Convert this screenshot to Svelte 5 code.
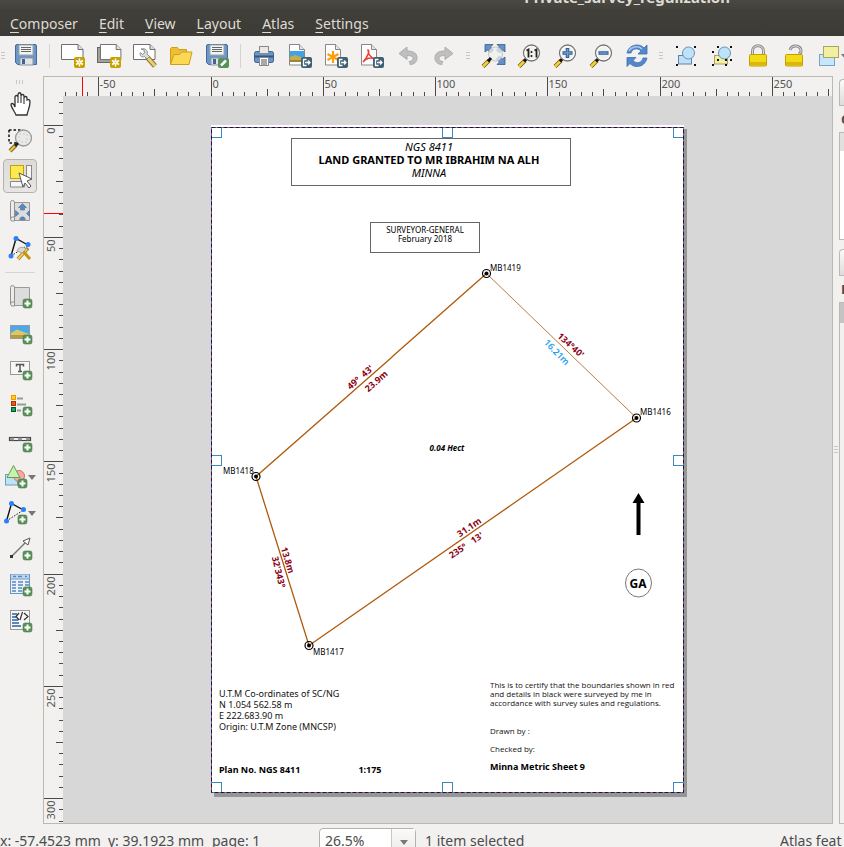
<script>
  const disk =
    '<path d="M3 .5h18q1.500 0 1.500 1.500v18.500h-19l-2-2v-16.500q0-1.500 1.500-1.500z" fill="#6c96c8" stroke="#456a9b"/><rect x="5" y="1" width="14" height="10" fill="#f4f4f2" stroke="#9aa"/><path d="M7 3.500h10M7 5.500h10M7 7.500h10" stroke="#666" stroke-width="1"/><rect x="6" y="14" width="13" height="7" fill="#e4e4e2" stroke="#8796a8"/><rect x="8" y="15" width="3" height="5" fill="#3f6491"/>';
  const sheet =
    '<path d="M.5 .5h16.500l5 5v10h-21.500z" fill="#fff" stroke="#6f6f6f"/><path d="M17 .5v5h5" fill="#ddd" stroke="#6f6f6f"/>';
  const star =
    '<rect x="13" y="13" width="11" height="11" rx="2" fill="#c8a000"/><path d="M18.500 14.500v8M15 16.500l7 4M22 16.500l-7 4" stroke="#fff" stroke-width="1.500"/><circle cx="18.500" cy="18.500" r="2" fill="#fff"/><circle cx="18.500" cy="18.500" r="1" fill="#e8cf60"/>';
  const plus =
    '<rect x="15" y="14" width="9" height="9" rx="2" fill="#589059" stroke="#4b7d4c" stroke-width=".6"/><path d="M19.500 15.500v6M16.500 18.500h6" stroke="#fff" stroke-width="2"/>';
  const shiftPlus = plus.replace('<rect', '<g transform="translate(-1 0)"><rect') + '</g>';
  const filePage =
    '<path d="M1.500 .5h10l5 5v15.500h-15z" fill="#fff" stroke="#888"/><path d="M11.500 .5v5h5" fill="#e4e4e4" stroke="#888"/>';
  const exporter =
    '<rect x="13" y="13" width="11" height="11" rx="2" fill="#3f5f74"/><path d="M18.500 15.500h-3v6h3M17 18.500h5M20 16.500l2 2-2 2" stroke="#fff" stroke-width="1.300" fill="none"/>';
  const handle =
    '<path d="M2 22.500l6-6" stroke="#6b5a20" stroke-width="4"/><path d="M2 22.500l6-6" stroke="#f9d12e" stroke-width="2.500"/><path d="M7 17.500l3-3.500" stroke="#111" stroke-width="3"/>';
  const lens = handle + '<circle cx="14.500" cy="9" r="8" fill="#f0f0ee" stroke="#777" stroke-width="1.300"/><circle cx="14.500" cy="9" r="6.500" fill="none" stroke="#fff"/>';
  const dots = (pts) => pts.map(([x, y]) => `<rect x="${x}" y="${y}" width="2" height="2" fill="#111"/>`).join('');
  const lockBody = '<rect x="3.500" y="10.500" width="17" height="11.500" rx="1" fill="#f2dc16" stroke="#c59f00"/><path d="M4 19.500h16" stroke="#dcb60c" stroke-width="3"/>';
  const nodes =
    '<path d="M3 20L8 2.500L20 9" fill="none" stroke="#111" stroke-width="1.400"/><path d="M3 20L20 9" stroke="#111" stroke-dasharray="1.500 1.500"/><g fill="#2a7fff"><circle cx="8" cy="2.500" r="2.500"/><circle cx="20" cy="8.500" r="2.500"/><circle cx="3" cy="20" r="2.500"/></g>';
  const roll =
    '<path d="M6 2.500h15.500v18h-15z" fill="#dcdcdc" stroke="#9a9a9a"/><path d="M6.500 17q-4-1-4 2t4 2V2.500q0-2-2-2t-2 2V19" fill="#ececec" stroke="#8f8f8f"/>';

  const icons = {
    save: disk,
    new: sheet + star,
    duplicate:
      '<rect x=".5" y="3.500" width="17" height="15" fill="#a0a39a" stroke="#666"/><g transform="translate(3 0) scale(.95 1)">' + sheet + '</g>' + star,
    manager:
      sheet +
      '<path d="M14 13l8 9" stroke="#8c7320" stroke-width="5"/><path d="M14.500 13.500l7.500 8.500" stroke="#e8d07a" stroke-width="3"/><path d="M8 5l3 1 .5 3-2 1.500-2-2c-1.500 3 1.500 5.500 4 4l2.500 2.500 2.500-2.500-2.500-2.500c1.500-3-2-6.500-6-5z" fill="#d9dddd" stroke="#80868a" stroke-width=".9"/>',
    open: '<path d="M1.500 20.500V4.500l1-1h6l1 2h8v3" fill="#eebf35" stroke="#cf9d1c"/><path d="M1.500 20.500L5 10.500h5.500l2-2.500h10.500l-3 12.500z" fill="#fcd955" stroke="#cf9d1c"/>',
    saveas:
      disk +
      '<rect x="13" y="14" width="11" height="10" rx="2" fill="#589059"/><path d="M16 21.500l5-5" stroke="#fff" stroke-width="2.500"/>',
    print:
      '<rect x="2.500" y="7.500" width="19" height="11" rx="2" fill="#6a95c8" stroke="#3c5f8d"/><path d="M3 12.500h18" stroke="#35567e" stroke-width="2"/><rect x="7.500" y="2.500" width="9" height="7" fill="#e8e8e6" stroke="#8a8a8a"/><rect x="7.500" y="13.500" width="9" height="8" fill="#fff" stroke="#8a8a8a"/><path d="M9 16h6M9 18h6M9 20h6" stroke="#555"/>',
    image:
      filePage +
      '<rect x="2" y="7" width="14" height="11" fill="#3fa3ec"/><path d="M2 13l5-2 9 3v4H2z" fill="#c4ae4a"/><path d="M2 17h14" stroke="#9a8733" stroke-width="2"/>' + exporter,
    svg: filePage + '<path d="M9 7v12M3.500 10l11 6M14.500 10l-11 6" stroke="#ff9d0a" stroke-width="2.200"/>' + exporter,
    pdf:
      filePage +
      '<path d="M8 6c2 0 0 7-5 12 3-4 8-5 12-3-4-1-7-5-7-9z" fill="none" stroke="#f03a34" stroke-width="1.500"/>' + exporter,
    undo: '<path d="M3 9.500l8-6.500v4c7 0 10 2.500 10 7 0 4-3 6.500-7 6.500 0-1 0-2-1-3 2 0 4-1 4-3 0-2-2-3-6-3v4z" fill="#bfbfbf" stroke="#adadad"/>',
    redo: '<path d="M21 9.500l-8-6.500v4c-7 0-10 2.500-10 7 0 4 3 6.500 7 6.500 0-1 0-2 1-3-2 0-4-1-4-3 0-2 2-3 6-3v4z" fill="#bfbfbf" stroke="#adadad"/>',
    full:
      '<g fill="#668fc3" stroke="#355d92" stroke-width=".8"><path d="M4 .5h8l-2.500 2.500 3 3-3 3-3-3L4 8z"/><path d="M24 .5h-8l2.500 2.500-3 3 3 3 3-3L24 8z"/><path d="M24 20.500h-8l2.500-2.500-3-3 3-3 3 3L24 13z"/></g><circle cx="14.500" cy="10" r="7" fill="#efefee" fill-opacity=".75" stroke="#c4c4c4"/>' + handle,
    actual:
      lens + '<path d="M9.500 6.500l2-1v8M17.500 6.500l2-1v8" fill="none" stroke="#222" stroke-width="1.800"/><path d="M14.500 7v2M14.500 11v2" stroke="#222" stroke-width="1.600"/>',
    zoomin: lens + '<path d="M14.500 4v10M9.500 9h10" stroke="#355d92" stroke-width="3.500"/><path d="M14.500 5v8M10.500 9h8" stroke="#6f9bd0" stroke-width="1.500"/>',
    zoomout: lens + '<path d="M9.500 9h10" stroke="#355d92" stroke-width="3.500"/><path d="M10.500 9h8" stroke="#6f9bd0" stroke-width="1.500"/>',
    refresh:
      '<path d="M2 9c1-5 5-8 10-8 3 0 5 1 7 3l3-3v9h-9l3-3c-4-4-9-2-10 2z" fill="#5389ca" stroke="#3d6fae" stroke-width=".8"/><path d="M22 14c-1 5-5 8.500-10 8.500-3 0-5-1-7-3l-3 3v-9h9l-3 3c4 4 9 2 10-2.500z" fill="#5389ca" stroke="#3d6fae" stroke-width=".8"/><path d="M4 7c2-4 9-6 13-2" stroke="#a8c8ea" fill="none" stroke-width="1.500"/>',
    group:
      '<rect x="4.500" y="11.500" width="13" height="8.500" fill="#bfdff8" stroke="#5b84a8"/><circle cx="14.500" cy="9" r="6" fill="#bfe2fb" stroke="#6a93b5"/>' + dots([[2, 2], [20, 2], [2, 20], [20, 20]]),
    ungroup:
      '<rect x="4.500" y="11.500" width="13" height="8.500" fill="#f3efa0" stroke="#aaa05a"/><circle cx="14.500" cy="9" r="6" fill="#bfe2fb" stroke="#6a93b5"/>' +
      dots([[7, 2], [20, 2], [2, 7], [2, 20], [7, 15], [15, 15], [20, 15], [15, 20]]),
    lock: '<path d="M6.500 10V7c0-7 11-7 11 0v3" fill="none" stroke="#8d8d8d" stroke-width="3"/><path d="M6.500 10V7c0-7 11-7 11 0v3" fill="none" stroke="#ddd"/>' + lockBody,
    unlock: '<path d="M8 6c2-6 11-5 11 1 0 2-1 3-3 3" fill="none" stroke="#8d8d8d" stroke-width="3"/><path d="M8 6c2-6 11-5 11 1 0 2-1 3-3 3" fill="none" stroke="#ddd"/>' + lockBody,
    raise: '<rect x="1.500" y="10.500" width="15" height="11" fill="#c5e6fb" stroke="#7ba4c4"/><rect x="5.500" y="2.500" width="15" height="11" fill="#f2f0a0" stroke="#aaa560"/>',
    pan: '<path d="M8 23c-1-3-4-6-5-10 0-2 2-2 3 0l1 2V5c0-2 3-2 3 0V3c0-3 3-3 3 0v1c0-2 3-2 3 0v2c0-2 3-2 3 0v2c2-1 3 0 3 2 0 5-2 8-3 13z" fill="#fff" stroke="#333" stroke-width="1.300"/><path d="M10 5v6M13 4v7M16 6v6" stroke="#333" stroke-width="1.100"/>',
    region:
      '<path d="M1 2h14M1 2v13h8" fill="none" stroke="#111" stroke-width="1.500" stroke-dasharray="2.500 2"/><circle cx="15.500" cy="10" r="8" fill="#e9e9e8" stroke="#999" stroke-width="1.300"/><path d="M11 6h8v8h-8z" fill="none" stroke="#ccc" stroke-dasharray="2 2"/><path d="M2 23l6-6" stroke="#7a6320" stroke-width="4"/><path d="M2 23l6-6" stroke="#f0c640" stroke-width="2.200"/><path d="M7 18l3-3" stroke="#222" stroke-width="3"/>',
    select:
      '<rect x="2.500" y="1.500" width="13" height="13" fill="#fce94f" stroke="#c4a000"/><rect x="18.500" y="1.500" width="5" height="13" fill="#f6f6f6" stroke="#888"/><path d="M2.500 17.500h14v5.500h-14z" fill="#f6f6f6" stroke="#888"/><path d="M11 9l13 6-5 2 4 5-2 2-4-5-2 4z" fill="#fff" stroke="#555"/>',
    content:
      roll + '<g fill="#5b88bf" stroke="#3d6494" stroke-width=".5"><path d="M14.500 3.500l4 4h-2v2.500h-4v-2.500h-2z"/><path d="M7.500 10.500l3.500 3-3.500 3zM21.500 10.500l-3 3 3 3zM14.500 20l-3-.5 1.500-2.500h3l1.500 2.500z"/></g>',
    editnodes:
      nodes + '<path d="M10 23l10-11" stroke="#9a7a20" stroke-width="3.500"/><path d="M10 23l9-10" stroke="#f4cf50" stroke-width="2"/><path d="M14 14l8 9" stroke="#c79412" stroke-width="3"/><path d="M9 15c1-4 6-5 9-2l-4 4z" fill="#d8d8d0" stroke="#999" stroke-width=".8"/>',
    map: roll + plus,
    picture:
      '<rect x="2.500" y="4.500" width="19" height="13" fill="#48a9ec" stroke="#999"/><path d="M3 12l6-3.500 12 4.500v4H3z" fill="#dcc66a"/><path d="M3 15.500h18" stroke="#b59d3c" stroke-width="3"/>' + plus,
    label:
      '<rect x="2.500" y="4.500" width="19" height="13" fill="#f7f7f7" stroke="#999"/><path d="M8.500 9.500v-2h7v2M12 7.500v7M10 14.500h4" fill="none" stroke="#555" stroke-width="1.500"/>' + plus,
    legend:
      '<rect x="3.500" y="2.500" width="4" height="4" fill="#ffd400" stroke="#f0960a"/><rect x="3.500" y="8.500" width="4" height="4" fill="#f3520c" stroke="#a83208"/><rect x="3.500" y="14.500" width="4" height="4" fill="#0cab58" stroke="#05522c"/><path d="M9 5.500h6M9 11.500h9M9 17.500h4" stroke="#999" stroke-width="2"/>' + plus,
    scalebar:
      '<rect x="1.500" y="8.500" width="21" height="3" fill="#fff" stroke="#444" stroke-width="1.200"/><path d="M2 10h4M10 10h4M18 10h4" stroke="#999" stroke-width="2.500"/>' + plus,
    shape:
      '<rect x="1.500" y="9.500" width="12" height="10.500" fill="#bfe2fb" stroke="#6f9dc0"/><circle cx="15" cy="11" r="5.500" fill="#f7aaa6" stroke="#d6706c"/><path d="M9.500 .5l6.500 12H3z" fill="#c3f4b0" stroke="#5fa04e"/>' + shiftPlus,
    addnodes: '<g transform="translate(-.5 0)">' + nodes + '</g>' + shiftPlus,
    arrow: '<path d="M3.500 19.500L18 5" stroke="#777" stroke-width="1.500"/><path d="M22 1l-2 7-5-4z" fill="#fff" stroke="#555"/><rect x="2" y="18" width="3" height="3" fill="#333"/>' + plus,
    table:
      '<rect x="2.500" y="1.500" width="19" height="19" fill="#eaf3fb" stroke="#6a94c4"/><path d="M3 3.500h18" stroke="#b9d8f0" stroke-width="4"/><path d="M3 6h18" stroke="#6a94c4"/><path d="M4 9h4M10 9h5M17 9h4M4 12h4M10 12h5M17 12h4M4 15h4M10 15h4M4 18h4M10 18h4M5 3.500h3M10 3.500h4M17 3.500h2" stroke="#5c87bb" stroke-width="1.400"/>' + plus,
    html:
      '<rect x="2.500" y="1.500" width="19" height="19" fill="#f7f7f7" stroke="#999"/><path d="M4 5h5M4 8h4M4 11h6M4 14h7M4 17h9" stroke="#5c87bb" stroke-width="2"/><path d="M11 4l-3 3.500 3 3.500M16 4l4 3.500-4 3.500M14.500 3l-2.500 8" fill="none" stroke="#333" stroke-width="1.200"/>' + plus
  };

  const menus = ['Composer', 'Edit', 'View', 'Layout', 'Atlas', 'Settings'];

  const topTools = [
    ['save', 'Save project'], 'sep',
    ['new', 'New composition'], ['duplicate', 'Duplicate composition'], ['manager', 'Composer manager'], ['open', 'Add items from template'], ['saveas', 'Save as template'], 'sep',
    ['print', 'Print'], ['image', 'Export as image'], ['svg', 'Export as SVG'], ['pdf', 'Export as PDF'], ['undo', 'Undo'], ['redo', 'Redo'], 'grip',
    ['full', 'Zoom full'], ['actual', 'Zoom to 100%'], ['zoomin', 'Zoom in'], ['zoomout', 'Zoom out'], ['refresh', 'Refresh view'], 'grip',
    ['group', 'Group items'], ['ungroup', 'Ungroup items'], ['lock', 'Lock selected items'], ['unlock', 'Unlock all items'], ['raise', 'Raise selected items', true]
  ];

  const sideTools = [
    ['pan', 'Pan'], ['region', 'Zoom'], ['select', 'Select item'], ['content', 'Move item content'], ['editnodes', 'Edit nodes'], 'sep',
    ['map', 'Add map'], ['picture', 'Add image'], ['label', 'Add label'], ['legend', 'Add legend'], ['scalebar', 'Add scalebar'],
    ['shape', 'Add shape', true], ['addnodes', 'Add nodes item', true], ['arrow', 'Add arrow'], ['table', 'Add attribute table'], ['html', 'Add HTML frame']
  ];

  let active = $state('select');
  let zoom = $state('26.5%');

  const pxPerMm = 2.245;
  function ticks(origin, from, to) {
    const list = [];
    for (let mm = from; mm <= to; mm += 5) {
      list.push({ mm, pos: Math.floor(origin + mm * pxPerMm) + 0.5, size: mm % 50 === 0 ? 19 : mm % 25 === 0 ? 7 : 4 });
    }
    return list;
  }
  const across = ticks(167.1, -65, 400);
  const down = ticks(48.1, -10, 500);

  const stations = [
    { name: 'MB1419', x: 275.5, y: 148.5, tx: 279, ty: 146 },
    { name: 'MB1416', x: 425.5, y: 293, tx: 429, ty: 290 },
    { name: 'MB1417', x: 98, y: 520.5, tx: 102, ty: 530 },
    { name: 'MB1418', x: 45, y: 351.5, tx: 12, ty: 349 }
  ];
  const bearings = [
    { text: "49°\u00a0 43'", x: 149, y: 252, turn: -41 },
    { text: '23.9m', x: 165, y: 256, turn: -41 },
    { text: "134°40'", x: 360, y: 220, turn: 42 },
    { text: '16.21m', x: 346, y: 227, turn: 46, blue: true },
    { text: '31.1m', x: 258, y: 402, turn: -34 },
    { text: "235°\u00a0\u00a0 13'", x: 255, y: 420, turn: -34 },
    { text: '13.8m', x: 77, y: 435, turn: 73 },
    { text: "32'343°", x: 68, y: 447, turn: 76 }
  ];
  const grabs = [[0, 2], [231, 2], [462, 2], [0, 330], [462, 330], [0, 657], [231, 657], [462, 657]];
</script>

{#snippet icon(name)}
  <svg class="icon" viewBox="0 0 24 24" aria-hidden="true">{@html icons[name]}</svg>
{/snippet}

<div class="window">
  <header class="title"><h1>Private_survey_regulization</h1></header>

  <nav class="menu">
    {#each menus as item}
      <button><u>{item[0]}</u>{item.slice(1)}</button>
    {/each}
  </nav>

  <div class="toolbar" role="toolbar" aria-label="Composer tools">
    <span class="grip first"></span>
    {#each topTools as tool}
      {#if tool === 'sep'}
        <span class="sep"></span>
      {:else if tool === 'grip'}
        <span class="grip"></span>
      {:else}
        <button aria-label={tool[1]} title={tool[1]}>{@render icon(tool[0])}</button>
        {#if tool[2]}<i class="more"></i>{/if}
      {/if}
    {/each}
  </div>

  <main>
    <div class="side" role="toolbar" aria-label="Item tools">
      <span class="grip flat"></span>
      {#each sideTools as tool}
        {#if tool === 'sep'}
          <span class="rule"></span>
        {:else}
          <button class:active={active === tool[0]} aria-label={tool[1]} title={tool[1]} onclick={() => (active = tool[0])}>
            {@render icon(tool[0])}{#if tool[2]}<i class="more"></i>{/if}
          </button>
        {/if}
      {/each}
    </div>

    <section class="view">
      <svg class="ruler across" aria-hidden="true">
        {#each across as t}
          <path d="M{t.pos} {t.size === 19 ? 0 : 19 - t.size}V19" />
          {#if t.size === 19}<text x={t.pos + 1} y="11">{t.mm}</text>{/if}
        {/each}
        <path class="cursor" d="M38.5 0V19" />
      </svg>
      <svg class="ruler down" aria-hidden="true">
        {#each down as t}
          <path d="M{t.size === 19 ? 0 : 19 - t.size} {t.pos - 19}H19" />
          {#if t.size === 19}<text text-anchor="end" transform="translate(11 {t.pos - 17}) rotate(-90)">{t.mm}</text>{/if}
        {/each}
        <path class="cursor" d="M0 117.5H19" />
      </svg>

      <div class="canvas">
        <article class="paper">
          <svg class="plan" viewBox="0 0 473 668">
            <path class="line" d="M275.5 148.500L182 231L180 233L45 351.500L98 520.500L425.500 293" />
            <path class="line thin" d="M275.5 148.500L425.500 293" />
            {#each stations as s}
              <circle class="ring" cx={s.x} cy={s.y} r="4" />
              <circle cx={s.x} cy={s.y} r="2" />
              <text x={s.tx} y={s.ty}>{s.name}</text>
            {/each}
            {#each bearings as b}
              <text class="bearing" class:blue={b.blue} transform="translate({b.x} {b.y}) rotate({b.turn})">{b.text}</text>
            {/each}
            <text class="area" x="236" y="326">0.04 Hect</text>
            <path d="M427.500 368l6 10h-4v32h-4v-32h-4z" />
            <ellipse class="seal" cx="427.500" cy="458" rx="13" ry="14" />
            <text class="initials" x="427" y="463">GA</text>
            {#each grabs as [x, y]}
              <rect class="grab" x={x + 0.5} y={y + 0.5} width="10" height="10" />
            {/each}
            <rect class="edge" x=".5" y="2.500" width="472" height="665" />
            <rect class="edge dash" x=".5" y="2.500" width="472" height="665" />
          </svg>

          <div class="box heading"><em>NGS 8411</em><strong>LAND GRANTED TO MR IBRAHIM NA ALH</strong><em>MINNA</em></div>
          <div class="box surveyor"><span>SURVEYOR-GENERAL</span><span>February 2018</span></div>
          <div class="note origin">U.T.M Co-ordinates of SC/NG<br />N 1.054 562.58 m<br />E 222.683.90 m<br />Origin: U.T.M Zone (MNCSP)</div>
          <div class="note number"><b>Plan No. NGS 8411</b><b>1:175</b></div>
          <div class="certificate">
            <p>This is to certify that the boundaries shown in red<br />and details in black were surveyed by me in<br />accordance with survey sules and regulations.</p>
            <p>Drawn by :</p>
            <p>Checked by:</p>
            <b>Minna Metric Sheet 9</b>
          </div>
        </article>
      </div>
    </section>

    <div class="splitter"><span class="grip"></span></div>

    <aside>
      <div class="tab"></div>
      <h2>C</h2>
      <div class="list history"><div class="head"></div></div>
      <div class="tab"></div>
      <h2>E</h2>
      <div class="list items"><div class="head"></div></div>
    </aside>
  </main>

  <footer>
    <span class="coords"><span>x: -57.4523 mm</span><span>y: 39.1923 mm</span></span>
    <span class="page">page: 1</span>
    <div class="combo">
      <input aria-label="Zoom level" bind:value={zoom} />
      <button aria-label="Zoom presets"><i class="more"></i></button>
    </div>
    <span>1 item selected</span>
    <span class="atlas">Atlas feat</span>
  </footer>
</div>

<style>
  :global(body) {
    margin: 0;
  }
  .window {
    display: flex;
    flex-direction: column;
    height: 100vh;
    overflow: hidden;
    background: #f2f1f0;
    color: #4c4c4c;
    font: 14px/20px 'Noto Sans', 'Open Sans', sans-serif;
  }
  button {
    margin: 0;
    padding: 0;
    border: 0;
    background: none;
    color: inherit;
    font: inherit;
  }
  .title {
    flex: none;
    height: 9px;
    overflow: hidden;
    background: linear-gradient(#4a4943, #42413b);
    color: #dfdbd2;
    text-align: right;
  }
  .title h1 {
    margin: -13px 114px 0 0;
    font-size: 15px;
    line-height: 20px;
  }
  .menu {
    display: flex;
    flex: none;
    gap: 21px;
    height: 27px;
    padding: 0 10px;
    background: linear-gradient(#403f39, #3c3b37);
    color: #dfdbd2;
  }
  .menu button {
    height: 30px;
  }
  .menu u {
    text-underline-offset: 3px;
  }
  .toolbar {
    display: flex;
    flex: none;
    align-items: center;
    height: 40px;
    overflow: hidden;
  }
  .toolbar button {
    display: grid;
    flex: none;
    place-items: center;
    width: 36px;
    height: 36px;
  }
  .icon {
    display: block;
    flex: none;
    width: 24px;
    height: 24px;
    overflow: visible;
  }
  .sep {
    flex: none;
    width: 1px;
    height: 24px;
    margin: 0 5px;
    background: #d6d4d1;
  }
  .grip {
    flex: none;
    width: 4px;
    height: 8px;
    margin: 0 5px 0 4px;
    background: repeating-linear-gradient(#c9c7c4 0 1px, transparent 1px 3px);
  }
  .grip.first {
    margin: 0 3px 0 1px;
  }
  .grip.flat {
    width: 8px;
    height: 4px;
    margin: 4px 0 2px 16px;
    background: repeating-linear-gradient(90deg, #c9c7c4 0 1px, transparent 1px 3px);
  }
  .more {
    flex: none;
    border: 4px solid transparent;
    border-top: 5px solid #777;
    border-bottom: 0;
  }
  .toolbar .more {
    margin-left: -7px;
  }
  main {
    display: flex;
    flex: 1;
    min-height: 0;
  }
  .side {
    display: flex;
    flex: none;
    flex-direction: column;
    width: 43px;
  }
  .side button {
    display: flex;
    flex: none;
    align-items: center;
    justify-content: center;
    box-sizing: border-box;
    width: 34px;
    height: 34px;
    margin: 1px 3px;
    border: 1px solid transparent;
    border-radius: 4px;
  }
  .side button.active {
    border-color: #b5b2ad;
    background: linear-gradient(#dddbd8, #e8e6e4);
  }
  .rule {
    flex: none;
    height: 1px;
    margin: 6px 8px 6px 5px;
    background: #d6d4d1;
  }
  .view {
    display: grid;
    flex: 1;
    grid-template: 19px 1fr / 19px 1fr;
    min-width: 0;
    border: 1px solid #bab9b3;
  }
  .ruler {
    display: block;
    width: 100%;
    height: 100%;
    overflow: hidden;
    fill: none;
    stroke: #4a4a4a;
    font-size: 11px;
  }
  .ruler text {
    fill: #555;
    stroke: none;
  }
  .ruler .cursor {
    stroke: #f00;
  }
  .across {
    grid-column: 1 / 3;
  }
  .down {
    grid-area: 2 / 1;
    min-height: 0;
  }
  .canvas {
    position: relative;
    overflow: hidden;
    background: #d7d7d7;
  }
  .paper {
    position: absolute;
    top: 29px;
    left: 148px;
    width: 473px;
    height: 668px;
    background: #fff;
    box-shadow: 3px 4px #969696;
    color: #111;
  }
  .plan {
    position: absolute;
    inset: 0;
    font-size: 8px;
  }
  .plan .line {
    fill: none;
    stroke: #b0590a;
    stroke-width: 1.3;
  }
  .plan .thin {
    stroke-width: 0.8;
  }
  .plan .ring,
  .plan .seal {
    fill: none;
    stroke: #000;
    stroke-width: 1.2;
  }
  .plan .seal {
    stroke: #777;
    stroke-width: 1;
  }
  .plan .bearing {
    fill: #8a0010;
    dominant-baseline: central;
    font-size: 9px;
    font-weight: 700;
    text-anchor: middle;
  }
  .plan .blue {
    fill: #18a0f0;
    font-weight: 600;
  }
  .plan .area {
    fill: #000;
    font-style: italic;
    font-weight: 700;
    text-anchor: middle;
  }
  .plan .initials {
    font-size: 12px;
    font-weight: 700;
    text-anchor: middle;
  }
  .plan .edge {
    fill: none;
    stroke: #3c8fb8;
  }
  .plan .dash {
    stroke: #4c0030;
    stroke-dasharray: 4 2;
  }
  .plan .grab {
    fill: #fff;
    stroke: #3a8abb;
  }
  .box {
    position: absolute;
    display: flex;
    flex-direction: column;
    align-items: center;
    box-sizing: border-box;
    border: 1px solid #666;
    color: #000;
  }
  .heading {
    top: 13px;
    left: 80px;
    width: 280px;
    height: 48px;
    padding: 1px 4px 0 0;
    font-size: 11px;
    line-height: 13px;
  }
  .surveyor {
    top: 97px;
    left: 159px;
    width: 110px;
    height: 31px;
    padding-top: 2px;
    font-size: 8px;
    line-height: 9px;
  }
  .note {
    position: absolute;
    left: 8px;
    font-size: 9px;
    line-height: 11px;
    white-space: nowrap;
  }
  .origin {
    top: 563px;
  }
  .number {
    display: flex;
    gap: 58px;
    top: 639px;
    color: #000;
  }
  .certificate {
    position: absolute;
    top: 555px;
    left: 279px;
    font-family: 'Open Sans', 'Noto Sans', sans-serif;
    font-size: 8px;
    line-height: 9px;
    white-space: nowrap;
  }
  .certificate p {
    margin: 0 0 9px;
  }
  .certificate p:first-child {
    margin-bottom: 19px;
  }
  .certificate b {
    color: #000;
    font-family: 'Noto Sans', 'Open Sans', sans-serif;
    font-size: 9px;
  }
  .splitter {
    display: flex;
    flex: none;
    align-items: center;
    width: 6px;
  }
  .splitter .grip {
    margin: 0 1px;
  }
  aside {
    display: flex;
    flex: none;
    flex-direction: column;
    width: 5px;
    overflow: hidden;
  }
  .tab {
    flex: none;
    width: 40px;
    height: 25px;
    margin-top: 3px;
    border: 1px solid #bab9b3;
    border-right: 0;
    border-radius: 4px 0 0 0;
    background: linear-gradient(#fafafa, #dedcda);
  }
  aside h2 {
    margin: 3px 0 0 2px;
    font-size: 13px;
    line-height: 20px;
  }
  .list {
    width: 40px;
    margin-top: 3px;
    border: 1px solid #bab9b3;
  }
  .history {
    flex: none;
    height: 106px;
    margin-bottom: 6px;
    background: #fff;
  }
  .head {
    height: 18px;
    background: #e2e0de;
  }
  .items {
    flex: 1;
  }
  .items .head {
    height: 20px;
    background: #c4c4c4;
  }
  footer {
    display: flex;
    flex: none;
    align-items: flex-start;
    box-sizing: border-box;
    height: 23px;
    padding-top: 4px;
    overflow: hidden;
    line-height: 26px;
    white-space: nowrap;
  }
  .coords {
    display: flex;
    gap: 7px;
    width: 212px;
  }
  .page {
    width: 107px;
  }
  .combo {
    display: flex;
    box-sizing: border-box;
    width: 97px;
    height: 28px;
    margin-right: 9px;
    border: 1px solid #b5b2ad;
    border-radius: 4px;
    background: #fff;
  }
  .combo input {
    box-sizing: border-box;
    width: 71px;
    height: 24px;
    padding: 0 5px;
    border: 0;
    background: none;
    color: inherit;
    font: inherit;
  }
  .combo button {
    display: grid;
    flex: 1;
    place-items: center;
    border-left: 1px solid #c9c7c4;
    background: linear-gradient(#fafafa, #eceae8);
  }
  .atlas {
    width: 64px;
    margin-left: auto;
    overflow: hidden;
  }
</style>
